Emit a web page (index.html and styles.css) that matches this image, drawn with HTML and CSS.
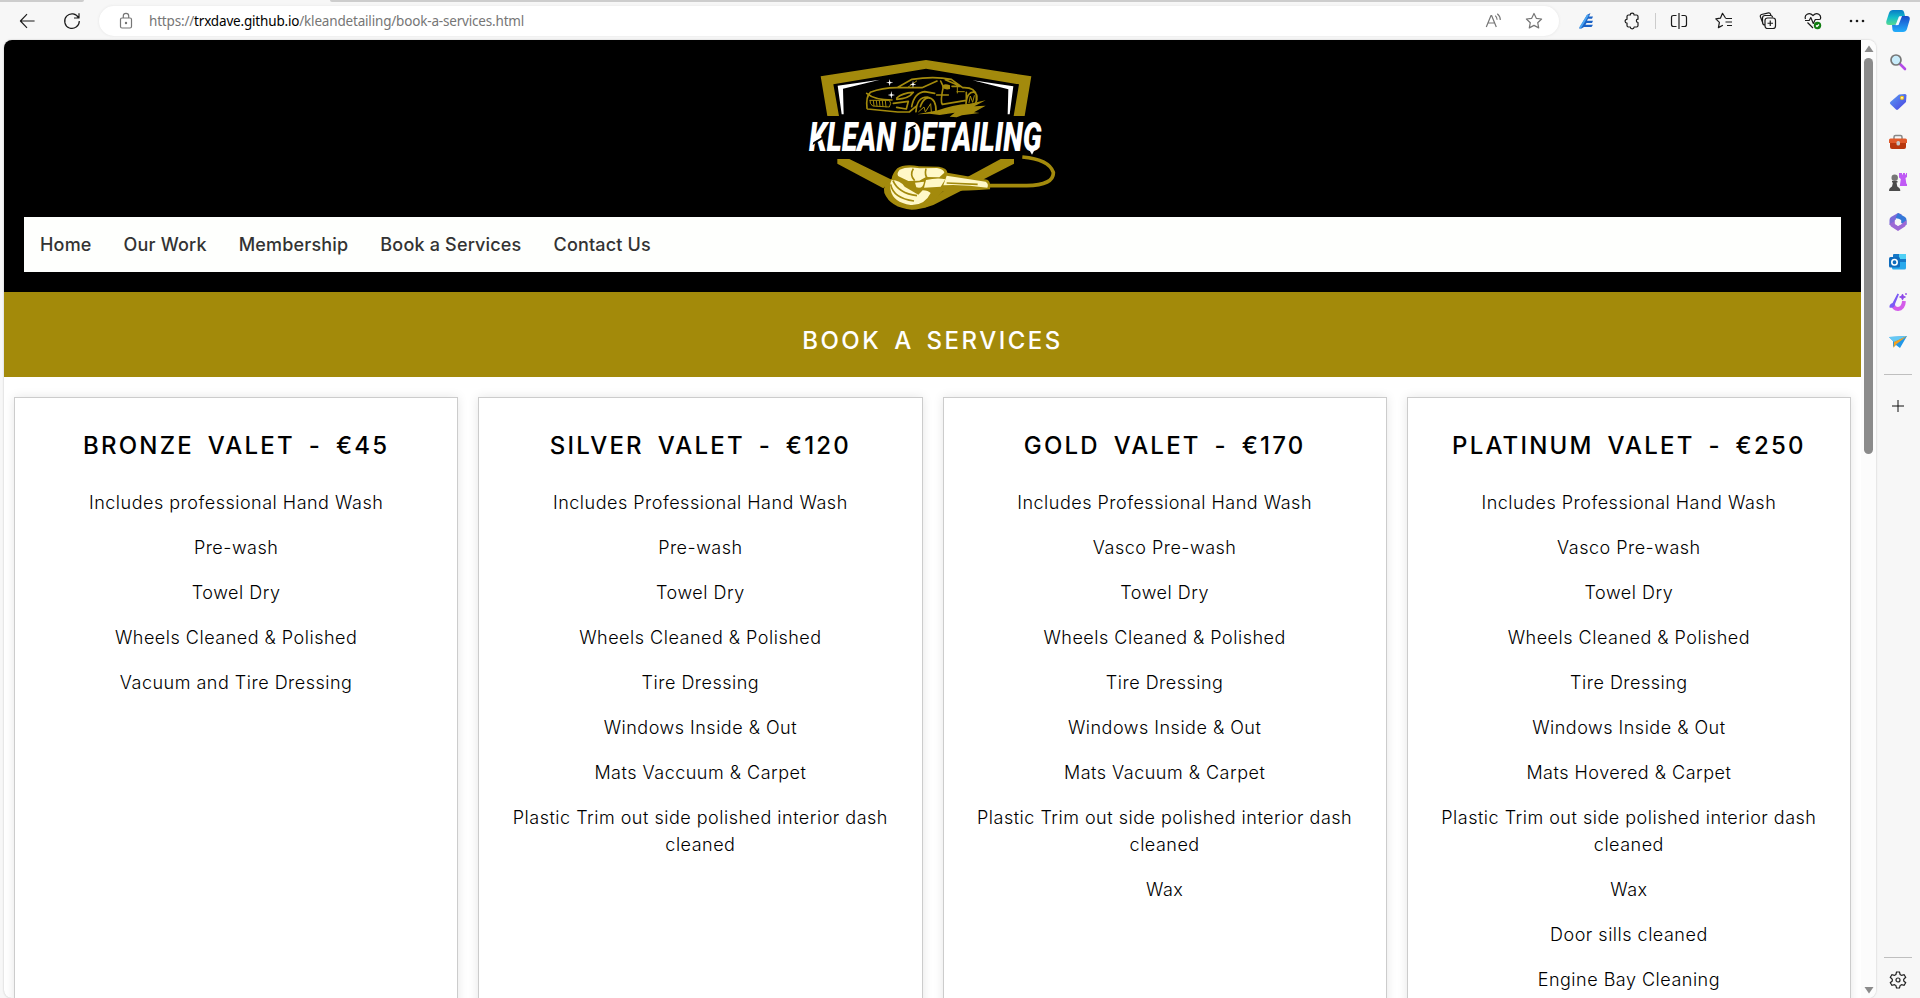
FILE: index.html
```html
<!DOCTYPE html>
<html lang="en">
<head>
<meta charset="utf-8">
<title>Klean Detailing</title>
<link rel="stylesheet" href="styles.css">
</head>
<body>
<div class="browser">
  <div class="toolbar">
    <span class="tab-edge tab-left"></span><span class="tab-edge tab-right"></span>
    <svg class="ico back" viewBox="0 0 18 18"><path d="M16.5 9H1.8M8.5 1.8 1.5 9l7 7.2"/></svg>
    <svg class="ico reload" viewBox="0 0 18 18"><path d="M15.6 6A7.3 7.3 0 1 0 16.3 9M16 1.2V6h-5"/></svg>
    <div class="address">
      <svg class="ico lock" viewBox="0 0 14 18"><rect x="1.5" y="6" width="11" height="10" rx="1.5"/><path d="M4.3 6V4a2.7 2.7 0 0 1 5.4 0v2"/><circle cx="7" cy="11" r=".6"/></svg>
      <span class="url">https://<b>trxdave.github.io</b>/kleandetailing/book-a-services.html</span>
      <svg class="ico read" viewBox="0 0 18 16"><path d="M1.3 14 6 2.5h.6L11.3 14M2.9 10h6.8M10.2 2.6a5 5 0 0 1 1.9 4.2M12.3.8a8 8 0 0 1 3 6.3"/></svg>
      <svg class="ico star" viewBox="0 0 18 18"><path d="m9 1.5 2.3 4.8 5.3.7-3.9 3.7 1 5.2L9 13.4l-4.7 2.5 1-5.2L1.4 7l5.3-.7z"/></svg>
    </div>
    <div class="tools">
      <svg class="ico" viewBox="0 0 18 18"><path fill="#1b63c6" stroke="none" d="M1 16.500 9 3l3.500-2L11 4.500h4l-1 2.200h-4l-1 2h6L14 11H8.500l-1 1.800H15L13.500 15H6l-2.500 1.500z"/><path d="m2 16 8-13" stroke="#4aa3f0" stroke-width="2"/></svg>
      <svg class="ico" viewBox="0 0 18 18"><path d="M5.500 3h1.800a1.900 1.900 0 0 1 3.800 0h2.400q1.500 0 1.500 1.500v2.700a1.500 1.500 0 0 0 0 3.300v3q0 1.500-1.500 1.500h-2.400a1.900 1.900 0 0 1-3.800 0H5.500Q4 15 4 13.500v-2.400a1.900 1.900 0 0 1 0-3.800V4.500Q4 3 5.500 3z"/></svg>
      <i class="divider"></i>
      <svg class="ico" viewBox="0 0 18 18"><path d="M9 1v16M6.500 3.500h-3Q1.500 3.500 1.500 5.500v7q0 2 2 2h3M11.500 3.500h3q2 0 2 2v7q0 2-2 2h-3"/></svg>
      <svg class="ico" viewBox="0 0 18 18"><path d="M10.500 6 7.500 1.300 5.400 6.200.8 6.900l3.600 3.500-1 5.200 4.500-2.300M10.500 6.500H17M10.500 10H17M12 13.500h5"/></svg>
      <svg class="ico" viewBox="0 0 18 18"><rect x="6" y="6" width="10.500" height="10.500" rx="2.500"/><path d="M11.250 8.500v5.500M8.500 11.250H14M4 11.500 1.300 4.500Q1 3 2.500 2.500l7-1.600q1.600-.2 2 1.300l.4 1.500M6 13Q3.500 13 3.500 10V6q0-2.500 2.500-2.500h5.500q2 0 2 2"/></svg>
      <svg class="ico" viewBox="0 0 18 18"><path d="M1.500 7C0 3 5-.5 9 3.500 13-.5 18 3 16.200 7.500M3.500 10.500 9 16M1 8.500h4.200l1.600-3 2.500 6 2-4h4.500"/><circle cx="13.500" cy="13.500" r="3.700" fill="#107c10" stroke="none"/><path d="m12 13.500 1 1 2-2" stroke="#fff"/></svg>
      <svg class="ico dots" viewBox="0 0 18 18"><circle cx="3" cy="9" r="1.300"/><circle cx="9" cy="9" r="1.300"/><circle cx="15" cy="9" r="1.300"/></svg>
    </div>
    <svg class="copilot" viewBox="0 0 24 24"><defs><linearGradient id="cp1" x2="0" y2="1"><stop stop-color="#087bc7"/><stop offset=".5" stop-color="#14bcc9"/><stop offset="1" stop-color="#57db91"/></linearGradient><linearGradient id="cp2" x2="0" y2="1"><stop stop-color="#1949c8"/><stop offset="1" stop-color="#22aefb"/></linearGradient></defs><path d="M7 1h8.500q2 0 2.500 2l1 4h-4q-2 0-2.800 2.500L11 14q-.7 2-3 2H3q-3.500 0-2.600-4L3 4q1-3 4-3z" fill="url(#cp1)"/><path d="M16 7h5q3.500 0 2.600 4L21 20q-1 3-4 3H9q-2 0-2.500-2L6 16h2q2.300 0 3-2l1.500-5Q13.500 7 16 7z" fill="url(#cp2)"/><path d="m13 7.500 3-.5-3.500 9-3 .3z" fill="#f7fbff"/></svg>
  </div>

  <div class="workspace">
    <div class="viewport">
      <div class="page">
        <header class="site-header">
          <svg class="logo" viewBox="0 0 840 525">
            <g fill="#a38a0c">
              <path d="M112 213 92 94 408 45 724 94 704 213H671L687 118 408 71 130 118 147 213z"/>
              <path d="M142 342V356L280 430 305 404 178 342zM632 342H672V356L430 480 400 490 470 430z"/>
            </g>
            <path fill="#fff" d="M143 122 270 104 159 131 161 208H155zM670 124 548 106 655 133 653 208H659z"/>
            <g fill="none" stroke="#a38a0c" stroke-width="5" stroke-linecap="round" stroke-linejoin="round">
              <path d="M231 190q-4-35 10-48 35-14 80-14l45-25q65-10 118 0l34 25q37-2 41 24v15M321 128h75l45-20M452 108l8 17q-10 45-3 53l72-12V142M378 200q2-43 34-44 28 5 26 45M391 185q12-34 34-24M365 185q8-42 39-45l30 5M528 176q4-38 25-34 14 9 4 32M233 192l90 9h35l20-17M320 159q16-15 50-17-14 20-50 21M230 145q24 20 76 20M310 175l45-6-6 23-29-5M440 150h35M466 104l45 20h-25"/>
              <path stroke-width="3" d="M240 166h58q8 8 0 20l-50-3q-10-7-8-17M250 167l2 15M259 167l2 16M268 167l2 17M277 167l2 18M286 167l2 19M386 200l16-14 4 15 16-25 2 24M537 173l4-20 7 19 5-20M502 126v18M380 108l-28 20M501 140h22"/>
            </g>
            <path fill="#a38a0c" d="m382 208 62-12q40-17 95-20l48-10-34 18 34-2-35 20 17 2-53 7-16 6-21-2 15-12-45 7-30-4zM456 126q4-14 24-5v11q-17 4-24-6"/>
            <path fill="#fff" d="m299 102 2 9 9 2-9 2-2 9-2-9-9-2 9-2zM369 107l2 9 8 2-8 2-2 9-2-9-8-2 8-2zM304 138l2 10 9 2-9 2-2 9-2-9-9-2 9-2z"/>
            <text class="brand" x="57" y="319" textLength="698" lengthAdjust="spacingAndGlyphs">KLEAN DETAILING</text>
            <path fill="#000" d="m70 292 28-17v7l-30 18zM355 250l22-12v6l-24 13z"/>
            <path fill="#fff" d="m718 315 16-1-8 15z"/>
            <path d="M600 422H710Q792 420 790 382 777 343 697 336" fill="none" stroke="#a38a0c" stroke-width="11"/>
            <path d="M322 370q20-14 65-6l60 1q25 4 25 18l120 21q11 5 8 29-80 6-140 5l-20 22q-22 34-75 34-64-6-82-50-6-28 22-43 2-15 17-31z" fill="#a38a0c"/>
            <path d="M329 374q22-10 60-4l52-1q20 3 22 14l-15 14-40-1-20 11-33 1-25-12q-15-6-1-22zM305 405q25 0 39 20l41 24 13-13q17 1 24 8-18 38-60 36-53-8-60-45-4-18 3-30zM470 392l117 18q10 6 5 18-70-10-132-7zM375 413l27-3q-2 23-23 17zM408 405q35-8 58-2l-14 22-50 3z" fill="#fff8c8"/>
            <path d="M370 371q-12 20 4 36M408 371q-5 20 5 30M302 418q7 41 70 50M309 407q16 38 72 45M470 414l93 4" fill="none" stroke="#a38a0c" stroke-width="5"/>
          </svg>
          <nav class="menu"><a>Home</a><a>Our Work</a><a>Membership</a><a>Book a Services</a><a>Contact Us</a></nav>
        </header>
        <div class="banner"><h1>Book a Services</h1></div>
        <main class="plans">
          <section class="plan"><h2>Bronze Valet - €45</h2><p>Includes professional Hand Wash</p><p>Pre-wash</p><p>Towel Dry</p><p>Wheels Cleaned &amp; Polished</p><p>Vacuum and Tire Dressing</p></section>
          <section class="plan"><h2>Silver Valet - €120</h2><p>Includes Professional Hand Wash</p><p>Pre-wash</p><p>Towel Dry</p><p>Wheels Cleaned &amp; Polished</p><p>Tire Dressing</p><p>Windows Inside &amp; Out</p><p>Mats Vaccuum &amp; Carpet</p><p>Plastic Trim out side polished interior dash cleaned</p></section>
          <section class="plan"><h2>Gold Valet - €170</h2><p>Includes Professional Hand Wash</p><p>Vasco Pre-wash</p><p>Towel Dry</p><p>Wheels Cleaned &amp; Polished</p><p>Tire Dressing</p><p>Windows Inside &amp; Out</p><p>Mats Vacuum &amp; Carpet</p><p>Plastic Trim out side polished interior dash cleaned</p><p>Wax</p></section>
          <section class="plan"><h2>Platinum Valet - €250</h2><p>Includes Professional Hand Wash</p><p>Vasco Pre-wash</p><p>Towel Dry</p><p>Wheels Cleaned &amp; Polished</p><p>Tire Dressing</p><p>Windows Inside &amp; Out</p><p>Mats Hovered &amp; Carpet</p><p>Plastic Trim out side polished interior dash cleaned</p><p>Wax</p><p>Door sills cleaned</p><p>Engine Bay Cleaning</p></section>
        </main>
      </div>
      <div class="scrollbar">
        <svg class="arrow" viewBox="0 0 10 8"><path d="M5 .5 9.500 7H.5z"/></svg>
        <span class="thumb"></span>
        <svg class="arrow down" viewBox="0 0 10 8"><path d="M5 7.500 9.500 1H.5z"/></svg>
      </div>
    </div>
    <aside class="sidebar">
      <svg viewBox="0 0 18 18"><path d="m11 11 5 5" stroke="#b44be8" stroke-width="2.600" stroke-linecap="round"/><circle cx="7" cy="7" r="5" fill="#c8ecfb" stroke="#777" stroke-width="1.700"/></svg>
      <svg viewBox="0 0 18 18"><defs><linearGradient id="tg" x2="1" y2="1"><stop stop-color="#5ba0f4"/><stop offset="1" stop-color="#4b3fe0"/></linearGradient></defs><path d="M10 1.500 16 1q1.500 0 1.500 1.500L17 9l-8 7.500q-1 .8-2 0L1.300 11q-.8-1 0-2z" fill="url(#tg)"/><circle cx="13" cy="4.800" r="1.500" fill="#fff" stroke="#f4c20d" stroke-width="1.200"/></svg>
      <svg viewBox="0 0 18 18"><path d="M5 6V4q0-1.500 1.500-1.500h5Q13 2.500 13 4v2" fill="none" stroke="#888" stroke-width="1.500"/><path d="M0 7q0-1.500 1.500-1.500h15Q18 5.500 18 7v3H0z" fill="#e05a2b"/><path d="M1 10h16v4q0 2-2 2H3q-2 0-2-2z" fill="#b8370e"/><rect x="7.500" y="8" width="3.500" height="4.500" rx="1.500" fill="#c8c8c8"/></svg>
      <svg viewBox="0 0 18 18"><path d="M11 0h2v1.500h1V0h2v1.500h1V0h1v4l-1.500 1 .8 5.500 1 1V13h-7.500l1-7L10 4.500V0z" fill="#c05af5"/><circle cx="5.700" cy="4.800" r="3.200" fill="#777"/><path d="M3 8h5.500v1.500H7.500l.8 4 2 1.500q1 1 1 3H0q0-2 1-3l2-1.500 1-4H3z" fill="#4b4b4b"/></svg>
      <svg viewBox="0 0 18 18"><path d="M9 0 2 4Q.5 5 .5 7v5l6-3 .5-4 6-3.500z" fill="#7d6bd8"/><path d="m9 0 7 4q1.500 1 1.500 3v5l-5.500-2V7L6.500 5z" fill="#3578d8"/><path d="M.5 11 2 13.500 9 18l7-4.500 1.500-2.500V7L12 11.500 9 13l-3-2V8z" fill="#9c68d5"/><path d="m9 5.500 3.200 1.800v3.500L9 12.700l-3.200-1.900V7.300z" fill="#f7f7f7"/></svg>
      <svg viewBox="0 0 18 18"><path d="M5 1h11q1 0 1 1v7H4V2q0-1 1-1z" fill="#1678c7"/><path d="M10 1h7v5h-7z" fill="#50d0f5"/><path d="M3 9h14v6q0 1.500-1.500 1.500h-11Q3 16.500 3 15z" fill="#29a9ec"/><rect y="4" width="11" height="10.500" rx="1.500" fill="#0f6cbd"/><circle cx="5.500" cy="9.250" r="2.700" fill="none" stroke="#fff" stroke-width="1.600"/></svg>
      <svg viewBox="0 0 18 18"><path d="M4 11q.5 5 5 5 5.500-.5 6-8" fill="none" stroke="#d45ce9" stroke-width="3.800"/><path d="M.5 14.500Q0 11 3.500 10L8.500.5l1.500.7L6 11q0 4.500-5.500 3.500z" fill="#7a5af5"/><path d="m13.500 1 .9 2.100 2.100.9-2.100.9-.9 2.100-.9-2.100-2.100-.9 2.100-.9zM17 0v2M16 1h2" fill="#8d48e8" stroke="#8d48e8" stroke-width=".8"/></svg>
      <svg viewBox="0 0 18 18"><path d="M0 4 18 3l-7 12-4-3-3 2V8z" fill="#2197e8"/><path d="M0 4 18 3 5 9z" fill="#65c8f4"/><path d="m5 9 13-6L7 11.500 4.500 15z" fill="#f4a11f"/></svg>
      <hr class="apps-end">
      <svg class="plus" viewBox="0 0 18 18"><path d="M9 3v12M3 9h12"/></svg>
      <hr class="settings-top">
      <svg class="gear" viewBox="0 0 18 18"><path d="M7.500 1h3l.6 2.500 1.500.9 2.500-.8 1.600 2.700-2 1.900v1.700l2 1.800-1.600 2.700-2.500-.7-1.500.9-.6 2.400h-3l-.6-2.400-1.500-.9-2.500.7-1.600-2.700 2-1.800V8.200l-2-1.900 1.600-2.700 2.500.8 1.500-.9z"/><circle cx="9" cy="9" r="2"/></svg>
    </aside>
  </div>
</div>
</body>
</html>
```
FILE: styles.css
```css
* { box-sizing: border-box; }
body { margin: 0; background: #f7f7f7; color: #000; font-family: Inter, "Liberation Sans", sans-serif; overflow: hidden; }
.browser { height: 998px; display: flex; flex-direction: column; }
.toolbar { position: relative; height: 40px; display: flex; align-items: center; padding: 2px 10px 0 19px; }
.tab-edge { position: absolute; top: 0; height: 2px; background: #cdcdcd; }
.tab-left { left: 0; width: 84px; border-radius: 0 0 3px 0; }
.tab-right { left: 330px; right: 0; border-radius: 0 0 0 3px; }
.ico { width: 18px; height: 18px; flex: none; fill: none; stroke: #1b1b1b; stroke-width: 1.2; stroke-linejoin: round; }
.back { width: 17px; }
.reload { margin-left: 27px; }
.address { display: flex; align-items: center; flex: none; width: 1460px; height: 30px; margin-left: 18px; padding: 0 16px 0 20px; border-radius: 15px; background: #fff; box-shadow: 0 0 3px #e4e4e4; }
.address .ico { stroke: #767676; }
.address .lock { width: 14px; }
.url { margin-left: 16px; font: 13.5px "Noto Sans", sans-serif; color: #767676; letter-spacing: -.18px; flex: 1; }
.url b { font-weight: 400; color: #000; }
.address .read { height: 16px; margin-right: 22px; }
.tools { display: flex; align-items: center; flex: none; margin-left: 19px; gap: 26.5px; }
.divider { width: 1px; height: 16px; background: #ccc; margin: 0 -12.25px; }
.dots { fill: #1b1b1b; stroke: none; }
.copilot { width: 24px; height: 24px; margin-left: 20px; flex: none; }
.workspace { height: 958px; display: flex; }
.viewport { width: 1872px; margin-left: 4px; display: flex; overflow: hidden; border-radius: 8px; background: #fff; box-shadow: 0 0 2px #bbb; flex: none; }
.page { width: 1857px; height: 958px; overflow: hidden; }
.site-header { height: 252px; background: #000; padding: 5px 20px 0; }
.logo { display: block; width: 280px; height: 175px; margin: 0 0 -3px 766px; overflow: visible; }
.brand { font: italic 900 123px Roboto, sans-serif; fill: #fff; }
.menu { display: flex; align-items: center; gap: 32px; height: 55px; padding: 0 0 0 16px; background: #fefffd; color: #333; font-size: 18px; font-weight: 500; letter-spacing: .18px; }
.banner { height: 85px; display: flex; justify-content: center; padding-top: 31px; background: #a38a0a; color: #fff; }
h1, h2 { margin: 0; font-size: 24px; line-height: 36px; font-weight: 500; letter-spacing: 2.2px; word-spacing: 5.300px; text-transform: uppercase; text-align: center; }
h1 { letter-spacing: 2.500px; word-spacing: 4px; }
.plans { display: grid; grid-template-columns: repeat(4, 1fr); }
.plan { height: 700px; margin: 20px 10px; padding: 30px 30px 0; border: 1px solid #ccc; box-shadow: 0 0 10px rgba(0,0,0,.1); text-align: center; }
.plan h2 { margin-bottom: 25px; }
.plan p { margin: 0 0 18px; font-size: 18px; line-height: 27px; font-weight: 300; letter-spacing: .5px; }
.scrollbar { width: 15px; display: flex; flex-direction: column; align-items: center; background: #fcfcfc; padding: 5px 0 4px; }
.arrow { width: 10px; height: 8px; fill: #8b8b8b; }
.thumb { width: 9px; height: 396px; margin-top: 5px; border-radius: 5px; background: #8b8b8b; }
.down { margin-top: auto; }
.sidebar { width: 44px; display: flex; flex-direction: column; align-items: center; padding: 13px 0 9px; }
.sidebar svg { width: 18px; height: 18px; margin-bottom: 22px; flex: none; }
.sidebar hr { width: 28px; height: 1px; border: 0; background: #bfbfbf; margin: 0; flex: none; }
.sidebar .apps-end { margin-top: 1px; }
.sidebar .plus { margin: 22px 0 0; fill: none; stroke: #111; }
.sidebar .settings-top { margin-top: auto; margin-bottom: 13px; }
.sidebar .gear { margin: 0; fill: none; stroke: #222; stroke-width: 1.2; }
```
